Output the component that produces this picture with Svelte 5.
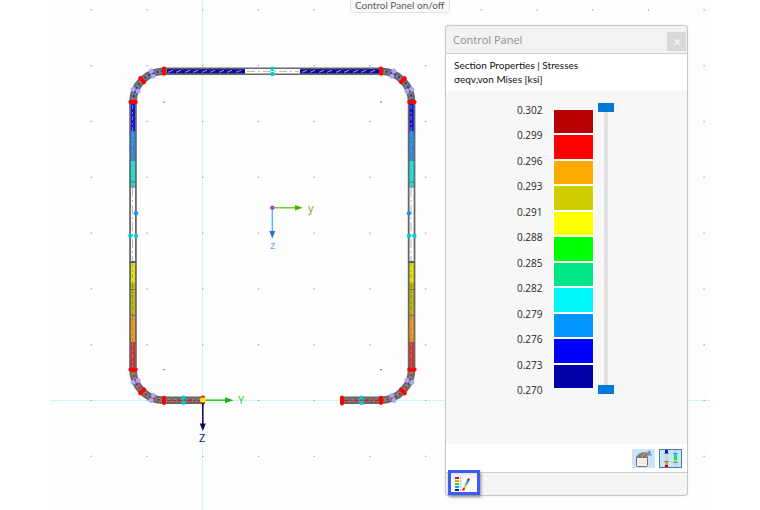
<script lang="ts">
	interface Step {
		color: string;
		name: string;
	}

	interface Segment {
		from: number;
		to: number;
		color: string;
		hatch: string;
	}

	const values = [
		"0.302", "0.299", "0.296", "0.293", "0.291", "0.288",
		"0.285", "0.282", "0.279", "0.276", "0.273", "0.270"
	];

	const steps: Step[] = [
		{ color: "#b90000", name: "dark red" },
		{ color: "#ff0000", name: "red" },
		{ color: "#ffaa00", name: "orange" },
		{ color: "#cfcf00", name: "olive" },
		{ color: "#ffff00", name: "yellow" },
		{ color: "#00ff00", name: "green" },
		{ color: "#00e687", name: "sea green" },
		{ color: "#00f7f7", name: "cyan" },
		{ color: "#0096ff", name: "light blue" },
		{ color: "#0000ff", name: "blue" },
		{ color: "#0000a5", name: "navy" }
	];

	// Section outline, mid-line of the wall
	const outline =
		"M203 400.2H164A31 31 0 0 1 133 369.5V102A31 31 0 0 1 164 71.3H381A31 31 0 0 1 411.6 102V369.5A31 31 0 0 1 381 400.2H342";

	const webSegments: Segment[] = [
		{ from: 104, to: 131, color: "#1010e0", hatch: "#8080c8" },
		{ from: 131, to: 161, color: "#1c8cf0", hatch: "#7a98b8" },
		{ from: 161, to: 187, color: "#10e4e0", hatch: "#68b8b4" },
		{ from: 187, to: 262, color: "#ffffff", hatch: "#b8b8b8" },
		{ from: 262, to: 283, color: "#e6e600", hatch: "#a8a83c" },
		{ from: 283, to: 315, color: "#bfb900", hatch: "#8e8a40" },
		{ from: 315, to: 342, color: "#f0991c", hatch: "#a88a50" },
		{ from: 342, to: 367, color: "#e02c2c", hatch: "#948080" }
	];

	const webs = [133, 411.6];
	const gridX = Array.from({ length: 12 }, (_, i) => 91.3 + i * 55.7);
	const gridY = Array.from({ length: 9 }, (_, i) => 9.8 + i * 55.8);

	const corners = [
		{ x: 164, y: 102, start: 180 },
		{ x: 381, y: 102, start: 270 },
		{ x: 381, y: 369.5, start: 0 },
		{ x: 164, y: 369.5, start: 90 }
	];

	let upper = $state(100);
	let lower = $state(0);
	let panelOpen = $state(true);
</script>

<main class="workspace">
	<svg class="drawing" viewBox="50 0 660 510" preserveAspectRatio="xMinYMin meet" role="img" aria-label="Section stresses">
		<path d="M202.5 0V510M50 400.5H710" stroke="#c9f8fb" stroke-width="1" />

		{#each gridX as x}
			{#each gridY as y}
				<rect x={x - 0.5} y={y - 0.5} width="1.2" height="1.2" fill="#989898" />
			{/each}
		{/each}
		{#each corners as c}
			<rect x={c.x - 0.5} y={c.y - 0.5} width="1.2" height="1.2" fill="#444444" />
		{/each}

		<path d={outline} fill="none" stroke="#676767" stroke-width="7.6" />
		<path d={outline} fill="none" stroke="#858585" stroke-width="3.6" />

		{#each webs as x}
			{#each webSegments as s}
				<path d="M{x} {s.from}V{s.to}" stroke={s.color} stroke-width="4" />
				<path d="M{x - 0.5} {s.from + 1}V{s.to}" stroke={s.hatch} stroke-width="1" stroke-dasharray={s.color === "#ffffff" ? "9 3 2 3" : "4 3 2 2"} />
			{/each}
			<path d="M{x - 2} 155.5h4M{x - 2} 182h4M{x - 2} 187h4M{x - 2} 289.5h4M{x - 2} 315.5h4" stroke="#66706c" stroke-width="1" />
			<path d="M{x - 3} 262h6" stroke="#5f5f5f" stroke-width="2" />
		{/each}

		<path d="M167 71.3H245M300 71.3H379" stroke="#0808a8" stroke-width="4" />
		<path d="M168 72.3l5 -2m3 2l5 -2m4 2l5 -2m3 2l5 -2m4 2l5 -2m3 2l5 -2m4 2l5 -2m3 2l5 -2m4 2l5 -2" fill="none" stroke="#a4a4b4" stroke-width="1" />
		<path d="M302 72.3l5 -2m3 2l5 -2m4 2l5 -2m3 2l5 -2m4 2l5 -2m3 2l5 -2m4 2l5 -2m3 2l5 -2m4 2l5 -2" fill="none" stroke="#a4a4b4" stroke-width="1" />
		<path d="M245 71.3H300" stroke="#ffffff" stroke-width="4.4" />
		<path d="M247 71.3H299" stroke="#b0b0b0" stroke-width="1" stroke-dasharray="8 3 2 3" />

		<path d="M167 400.2H201M344 400.2H379" stroke="#b52a2a" stroke-width="2" stroke-dasharray="5 1 3 1" />
		<path d="M168 399.5H201M345 399.5H379" stroke="#8c8484" stroke-width="1" stroke-dasharray="2 4" />

		{#each corners as c}
			<g transform="translate({c.x} {c.y}) rotate({c.start})">
				<path d="M30.8 0A30.8 30.8 0 0 1 0 30.8" fill="none" stroke={c.y === 102 ? "#34349a" : "#a43030"} stroke-width="2" stroke-dasharray="2.5 2" />
				{#each [22.5, 67.5] as angle}
					<g transform="rotate({angle})">
						<circle cx="28" cy="0" r="2.4" fill="#a7a7ff" />
						<circle cx="33.5" cy="0" r="2.4" fill="#a7a7ff" />
					</g>
				{/each}
				{#each [0, 45, 90] as angle}
					<path transform="rotate({angle})" d="M28.2 0H33.6" stroke="#ff0000" stroke-width="4" stroke-linecap="round" />
				{/each}
			</g>
		{/each}

		<path d="M342 397.4V403.4M203 397.6V402.8" stroke="#ff0000" stroke-width="4" stroke-linecap="round" />

		<g fill="#00cfd0">
			<circle cx="272.3" cy="68.7" r="2.2" />
			<circle cx="272.3" cy="74" r="2.2" />
			<circle cx="130.3" cy="235.7" r="2.2" />
			<circle cx="136" cy="235.7" r="2.2" />
			<circle cx="409" cy="235.7" r="2.2" />
			<circle cx="414.4" cy="235.7" r="2.2" />
			<circle cx="183.5" cy="397.6" r="2.2" />
			<circle cx="183.5" cy="402.8" r="2.2" />
			<circle cx="361.5" cy="397.6" r="2.2" />
			<circle cx="361.5" cy="402.8" r="2.2" />
		</g>
		<circle cx="136" cy="213.3" r="2.2" fill="#1594ff" />
		<circle cx="409" cy="213.3" r="2.2" fill="#1594ff" />

		<path d="M203 400.2H226" stroke="#22d622" stroke-width="1.6" />
		<path d="M225 397.2L233.5 400.2L225 403.2Z" fill="#14b814" />
		<path d="M202.8 401V424" stroke="#0b0b78" stroke-width="1.6" />
		<path d="M199.8 423.5H205.8L202.8 431Z" fill="#060658" />
		<circle cx="202.8" cy="400" r="2.8" fill="#ffe600" />
		<text x="238" y="404" class="axis global-y">Y</text>
		<text x="199" y="442" class="axis global-z">Z</text>

		<path d="M272.3 207.8H296" stroke="#66cc11" stroke-width="1.4" />
		<path d="M295 205L302.5 207.8L295 210.6Z" fill="#4aa800" />
		<path d="M272.3 208V232" stroke="#57b4ff" stroke-width="1.4" />
		<path d="M269.3 231H275.3L272.3 238.5Z" fill="#2276cc" />
		<circle cx="272.3" cy="207.8" r="2.2" fill="#a540e0" />
		<text x="308" y="212" class="axis local-y">y</text>
		<text x="270" y="249" class="axis local-z">z</text>
	</svg>

	<div class="tooltip" role="tooltip">Control Panel on/off</div>

	{#if panelOpen}
		<section class="panel">
			<header class="panel-header">
				<h1>Control Panel</h1>
				<button class="close-btn" aria-label="Close" onclick={() => (panelOpen = false)}>
					<svg width="6" height="6" viewBox="0 0 6 6"><path d="M0.5 0.5L5.5 5.5M5.5 0.5L0.5 5.5" stroke="currentColor" stroke-width="1.4" /></svg>
				</button>
			</header>

			<div class="panel-title">
				<div>Section Properties | Stresses</div>
				<div>σ<span class="sub">eqv,von Mises</span> [ksi]</div>
			</div>

			<div class="legend">
				<ol class="values">
					{#each values as value}
						<li>{value}</li>
					{/each}
				</ol>
				<ul class="scale">
					{#each steps as step}
						<li style="background-color: {step.color}" aria-label={step.name}></li>
					{/each}
				</ul>
				<div class="range">
					<input type="range" aria-label="Upper limit" bind:value={upper} />
					<input type="range" aria-label="Lower limit" bind:value={lower} />
				</div>
			</div>

			<div class="toolbar">
				<button class="tool-btn" aria-label="Legend options">
					<svg width="18" height="18" viewBox="0 0 18 18">
						<rect x="1.5" y="6.5" width="11" height="10" rx="1" fill="#f4f4f4" stroke="#77716d" />
						<path d="M1.5 6.5H12.5V8H1.5Z" fill="#77716d" />
						<path d="M3 10h8M3 13h8" stroke="#dedede" />
						<path d="M1.5 6L4 3.5L8 2L12.5 2.2L15 4.5L12.5 7L9 6.5L7.5 8L5 6.5Z" fill="#a38d7b" />
						<path d="M4 5.5L8 4M8 7L12 4" stroke="#665b54" stroke-width="0.8" />
						<path d="M12.5 1.5L15 0.5L17 6.5L14.5 5Z" fill="#6295c6" />
					</svg>
				</button>
				<button class="tool-btn selected" aria-label="Value range sliders">
					<svg width="18" height="17" viewBox="0 0 18 17">
						<rect x="3" y="0" width="3" height="17" fill="#d0d0d0" />
						<rect x="3" y="0" width="3" height="3" fill="#0b18ae" />
						<rect x="2" y="3" width="5" height="1" fill="#4c9bd0" />
						<rect x="2" y="11" width="5" height="1" fill="#4c9bd0" />
						<rect x="3" y="12" width="3" height="3" fill="#ff9c00" />
						<rect x="3" y="15" width="3" height="2" fill="#c60000" />
						<rect x="12" y="0" width="3" height="17" fill="#d0d0d0" />
						<rect x="12" y="4" width="3" height="3" fill="#10d5db" />
						<rect x="12" y="7" width="3" height="3" fill="#00f43c" />
						<rect x="12" y="10" width="3" height="2" fill="#b2e02c" />
						<rect x="11" y="3" width="5" height="1" fill="#4c9bd0" />
						<rect x="11" y="12" width="5" height="1" fill="#4c9bd0" />
					</svg>
				</button>
			</div>

			<footer class="tabs">
				<button class="tab" aria-label="Color scale">
					<svg width="16" height="16" viewBox="0 0 16 16">
						<rect x="1" y="2" width="4" height="2" fill="#c81212" />
						<rect x="1" y="5" width="4" height="2" fill="#ff9a00" />
						<rect x="1" y="8" width="4" height="2" fill="#1ee01e" />
						<rect x="1" y="11" width="4" height="2" fill="#00aef0" />
						<rect x="1" y="14" width="4" height="2" fill="#10109a" />
						<path d="M6 3h1.5M6 6h1.5M6 9h1.5M6 12h1.5M6 15h1.5" stroke="#8c8c8c" />
						<path d="M9 15.5L10.3 13" stroke="#e82020" stroke-width="2.2" />
						<path d="M10.3 13L11.6 10.5" stroke="#f2d400" stroke-width="2.2" />
						<path d="M11.6 10.5L12.9 8" stroke="#24d8a0" stroke-width="2.2" />
						<path d="M12.9 8L14 5.8" stroke="#2878ff" stroke-width="2.2" />
						<path d="M14 5.8L15 3.5" stroke="#b01830" stroke-width="2.2" />
					</svg>
				</button>
			</footer>
		</section>
	{/if}
</main>

<style>
	:global(body) {
		background: #ffffff;
	}

	.workspace {
		position: relative;
		min-height: 100vh;
		margin: 0 50px;
		background: #fdfdfd;
		font-family: "Open Sans", "Noto Sans", sans-serif;
		overflow: hidden;
	}

	.drawing {
		display: block;
		width: 100%;
	}

	.axis {
		font-size: 11px;
	}

	.global-y {
		fill: #22cc22;
	}

	.global-z {
		fill: #10107a;
	}

	.local-y {
		fill: #5cb80c;
	}

	.local-z {
		fill: #4aa8ff;
	}

	.tooltip {
		position: absolute;
		top: -3px;
		left: 300px;
		padding: 0 4px;
		border: 1px solid #e4e4e4;
		border-radius: 3px;
		background: #fafafa;
		color: #5a5a5a;
		font-family: Lato, "Open Sans", sans-serif;
		font-size: 10px;
		line-height: 14px;
		white-space: nowrap;
	}

	.panel {
		position: absolute;
		top: 25px;
		right: 22px;
		width: 241px;
		border: 1px solid #c6c6cc;
		border-radius: 4px;
		background: #f7f7f7;
		color: #262626;
		font-size: 10px;
		box-shadow: 0 0 1px #b8b8c0;
	}

	.panel-header {
		display: flex;
		justify-content: space-between;
		align-items: center;
		height: 27px;
		padding-left: 7px;
		border-bottom: 1px solid #cfcfd6;
		border-radius: 4px 4px 0 0;
		background: #f2f2f2;
	}

	h1 {
		margin: 0;
		color: #909090;
		font-size: 11px;
		font-weight: 400;
	}

	button {
		display: flex;
		align-items: center;
		justify-content: center;
		padding: 0;
		border: none;
		cursor: pointer;
	}

	.close-btn {
		align-self: flex-end;
		width: 19px;
		height: 19px;
		margin: 0 1px 2px 0;
		background: #d9d9d9;
		color: #f6f6f6;
	}

	.panel-title {
		padding: 4px 8px 5px;
		background: #ffffff;
		color: #101010;
		font-family: Lato, "Open Sans", sans-serif;
		line-height: 14px;
	}

	.sub {
		font-size: 10px;
	}

	.legend {
		display: flex;
		padding: 12px 0 47px 71px;
	}

	ol,
	ul {
		display: flex;
		flex-direction: column;
		margin: 0;
		padding: 0;
		list-style: none;
	}

	.values {
		justify-content: space-between;
		height: 294px;
		width: 36px;
		line-height: 14px;
	}

	.scale {
		gap: 2px;
		width: 41px;
		height: 280px;
		margin-top: 6px;
		border: 1px solid #ffffff;
		box-sizing: border-box;
		background: #ffffff;
	}

	.scale li {
		flex: 1;
	}

	.range {
		display: grid;
		width: 16px;
		height: 291px;
		margin-left: 4px;
		background: linear-gradient(#e1e1e1, #e1e1e1) center / 4px 100% no-repeat;
	}

	.range input {
		grid-area: 1 / 1;
		width: 16px;
		height: 291px;
		margin: 0;
		appearance: none;
		background: transparent;
		writing-mode: vertical-lr;
		direction: rtl;
		pointer-events: none;
	}

	.range input::-webkit-slider-thumb {
		appearance: none;
		width: 16px;
		height: 9px;
		background: #0078d7;
		cursor: pointer;
		pointer-events: auto;
	}

	.toolbar {
		display: flex;
		justify-content: flex-end;
		gap: 4px;
		padding: 5px 5px 4px;
		border-bottom: 1px solid #cfcfd3;
		background: #ffffff;
	}

	.tool-btn {
		width: 23px;
		height: 19px;
		background: #cce4f7;
	}

	.tool-btn.selected {
		border: 1px solid #3c7fb1;
	}

	.tabs {
		height: 22px;
		padding-left: 2px;
		border-radius: 0 0 4px 4px;
		background: #f5f5f5;
	}

	.tab {
		position: relative;
		top: -3px;
		width: 32px;
		height: 25px;
		padding-right: 4px;
		border: 3px solid #3c5cf4;
		background: linear-gradient(#e2e2e2, #ffffff 6px);
		box-shadow: 1px 2px 3px #88888c;
	}
</style>
